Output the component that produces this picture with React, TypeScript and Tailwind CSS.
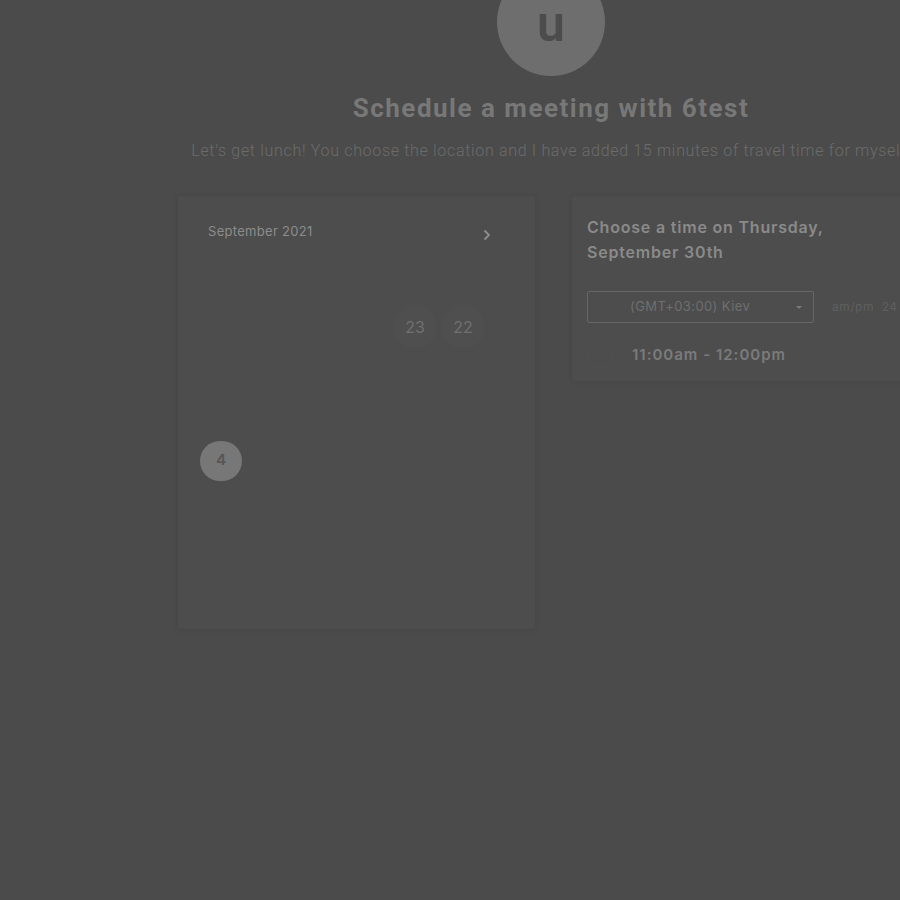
import React from "react";

export default function App() {
  const weekdays = ["Sun", "Mon", "Tue", "Wed", "Thu", "Fri", "Sat"];
  return (
    <div className="w-[900px] h-[900px] overflow-hidden bg-[#4b4b4b] relative" style={{ fontFamily: "Inter, 'Noto Sans', sans-serif" }}>
      <div className="w-[1102px] flex flex-col items-center">
        <div className="mt-[-32px] w-[108px] h-[108px] rounded-full bg-[#6e6e6e] flex items-center justify-center">
          <span className="text-[50px] font-semibold text-[#4c4c4c] leading-none mt-[4px]" style={{ fontFamily: "Roboto, sans-serif" }}>u</span>
        </div>
        <h1 className="mt-[15px] text-[26px] font-bold text-[#787878] leading-[34px] tracking-[1.5px] whitespace-nowrap" style={{ fontFamily: "Roboto, sans-serif" }}>
          Schedule a meeting with 6test
        </h1>
        <p className="mt-[14px] text-[16px] font-light text-[#6c6c6c] leading-[24px] tracking-[0.68px] whitespace-nowrap" style={{ fontFamily: "Roboto, sans-serif" }}>
          Let's get lunch! You choose the location and I have added 15 minutes of travel time for myself.
        </p>
      </div>
      <div className="flex mt-[33px] ml-[178px] gap-[37px] items-start">
        <div className="shrink-0 w-[357px] h-[433px] bg-[#4d4d4d] rounded-[3px] shadow-[0_0_6px_rgba(0,0,0,0.08)] pt-[25px] px-[21px]">
          <div className="flex items-center justify-between pl-[9px] pr-[20px]">
            <span className="text-[13px] text-[#8c8c8c] tracking-[0.3px]">September 2021</span>
            <svg width="14" height="14" viewBox="0 0 14 14" className="mt-[7px]">
              <path d="M4.5 2.5 L9 7 L4.5 11.5" stroke="#8e8e8e" strokeWidth="1.8" fill="none" />
            </svg>
          </div>
          <div className="mt-[32px] grid grid-cols-[repeat(7,48px)] text-[10px] text-[#4f4f4f] uppercase tracking-[1px]">
            {weekdays.map((d) => (
              <span key={d} className="text-center">{d}</span>
            ))}
          </div>
          <div className="mt-[16px] grid grid-cols-[repeat(7,48px)] auto-rows-[44px] gap-y-[0.5px]">
            <span />
            <span />
            <span />
            <span />
            <div className="flex items-center justify-center">
              <div className="w-[44px] h-[44px] rounded-full bg-[#4f4f4f] flex items-center justify-center text-[16px] text-[#707070]">23</div>
            </div>
            <div className="flex items-center justify-center">
              <div className="w-[44px] h-[44px] rounded-full bg-[#4f4f4f] flex items-center justify-center text-[16px] text-[#707070]">22</div>
            </div>
            <span />
            {Array.from({ length: 14 }).map((_, i) => (
              <span key={"e" + i} />
            ))}
            <div className="flex items-center justify-center">
              <div className="w-[42px] h-[40px] mr-[4px] rounded-full bg-[#777777] flex items-center justify-center text-[15px] font-bold text-[#575757]">4</div>
            </div>
          </div>
        </div>
        <div className="shrink-0 w-[340px] h-[185px] bg-[#4d4d4d] rounded-[3px] shadow-[0_0_6px_rgba(0,0,0,0.08)] pt-[19px] pl-[15px]">
          <h2 className="text-[16px] font-semibold text-[#8a8a8a] leading-[25px] tracking-[0.8px] whitespace-nowrap">
            Choose a time on Thursday,
            <br />
            September 30th
          </h2>
          <div className="mt-[26px] flex items-center">
            <div className="w-[227px] h-[32px] border border-[#666666] rounded-[2px] flex items-center pl-[42px] pr-[10px] justify-between">
              <span className="text-[13px] text-[#6f6f6f] tracking-[0.4px]">(GMT+03:00) Kiev</span>
              <svg width="8" height="5" viewBox="0 0 8 5"><path d="M1 1 L4 4 L7 1 Z" fill="#7a7a7a" /></svg>
            </div>
            <span className="ml-[18px] text-[12px] text-[#5f5f5f] tracking-[0.5px] whitespace-nowrap">am/pm&nbsp;&nbsp;24</span>
          </div>
          <div className="mt-[19px] flex items-center">
            <div className="w-[26px] h-[26px] rounded-full border border-[#505050]" />
            <span className="ml-[19px] text-[15px] font-semibold text-[#7b7b7b] tracking-[1px] whitespace-nowrap">11:00am - 12:00pm</span>
          </div>
        </div>
      </div>
    </div>
  );
}
